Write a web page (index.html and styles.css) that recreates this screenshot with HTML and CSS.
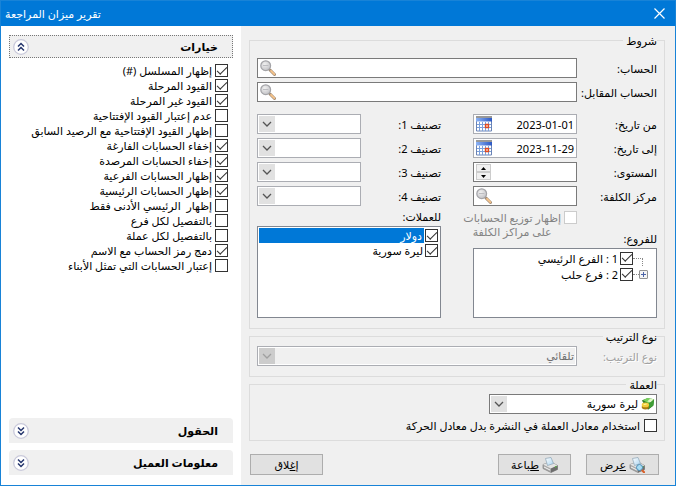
FILE: index.html
```html
<!DOCTYPE html>
<html lang="ar" dir="rtl">
  <head>
    <meta charset="UTF-8" />
    <meta name="viewport" content="width=device-width, initial-scale=1.0" />
    <title>تقرير ميزان المراجعة</title>
    <link rel="stylesheet" href="styles.css">
  </head>
  <body>
    <!-- icons -->
    <svg class="sprite" aria-hidden="true">
      <defs>
        <radialGradient id="lens" cx="40%" cy="35%" r="65%">
          <stop offset="0" stop-color="#f0f0f0" />
          <stop offset="1" stop-color="#c4c4c8" />
        </radialGradient>
        <linearGradient id="calHead" x1="0" x2="1" y1="0" y2="0">
          <stop offset="0" stop-color="#8db4f5" />
          <stop offset="1" stop-color="#2b57c4" />
        </linearGradient>
        <linearGradient id="paper" x1="0" x2="1" y1="0" y2="1">
          <stop offset="0" stop-color="#ffffff" />
          <stop offset="1" stop-color="#a9d3f0" />
        </linearGradient>
      </defs>
      <symbol id="search" viewBox="0 0 16 16">
        <path d="M10 10l4.500 4.500" stroke="#a08b76" stroke-width="3" stroke-linecap="round" />
        <path d="M11 10.800l3.300 3.400" stroke="#f7c48a" stroke-width="1.800" stroke-linecap="round" />
        <circle cx="5.700" cy="5.700" r="4.900" fill="url(#lens)" stroke="#a4a4a8" stroke-width="1.200" />
        <path d="M3 5.500h5.400" stroke="#bdbdc1" />
      </symbol>
      <symbol id="calendar" viewBox="0 0 16 16">
        <path d="M.5 2.500h15v12.500H.5z" fill="#fff" stroke="#6a83b5" />
        <path d="M0 2h16v3.500H0z" fill="url(#calHead)" />
        <path d="M.5 1h15" stroke="#333" stroke-width="2" stroke-dasharray="1 1" />
        <path d="M1 8.500h14M1 11.500h14M3.500 6v9M6.500 6v9M9.500 6v9M12.500 6v9" stroke="#7aa0dc" />
        <path d="M9.500 8.500h3v3h-3z" fill="#fbe3d8" stroke="#e04a20" stroke-width="1.400" />
      </symbol>
      <symbol id="printer" viewBox="0 0 16 16">
        <path d="M1 7.500L9 5l6.500 3.500v4L9 15.500 1 11.500z" fill="#a9a9a9" stroke="#7e7e7e" stroke-width=".7" />
        <path d="M1 7.500L9 5l6.500 3.500L9 11.500z" fill="#e4e4e4" />
        <path d="M3.500 1.500L9 .5l2.500 6L5.500 8.500z" fill="url(#paper)" stroke="#8ba3b5" stroke-width=".7" />
        <path d="M9 11.500v4l6.500-3v-4z" fill="#6d6d6d" />
        <path d="M2 10l6 3" stroke="#f6f6f6" />
        <circle cx="13.700" cy="9.800" r=".8" fill="#59c23c" />
      </symbol>
      <symbol id="preview" viewBox="0 0 16 16">
        <use href="#printer" />
        <path d="M12.500 12.500l2.500 2.700" stroke="#d8622c" stroke-width="2.200" stroke-linecap="round" />
        <circle cx="10.500" cy="10.500" r="3" fill="#a8dcf4" stroke="#4c8db5" />
      </symbol>
      <symbol id="money" viewBox="0 0 16 16">
        <path d="M1 4l6-2.500 8 1-1 7.500-6 4.500z" fill="#2f7a2a" />
        <path d="M2 3.500L8 1l7 1.500-6 5z" fill="#79d25e" />
        <path d="M7 5l3.500-3 4 .5L11 6z" fill="#e2f6c8" />
        <path d="M9 8l6-5-.8 6.500L9.500 13z" fill="#3f9e35" />
        <ellipse cx="5" cy="11.500" rx="4.200" ry="2.800" fill="#a97c12" />
        <ellipse cx="5" cy="9" rx="4.200" ry="2.600" fill="#f3cd3c" />
        <path d="M3 8.500l3.500-.5" stroke="#fff3a8" stroke-width="1.200" />
      </symbol>
      <symbol id="down" viewBox="0 0 16 16">
        <path d="M4 6l4 4 4-4" fill="none" stroke="currentColor" stroke-width="1.300" />
      </symbol>
      <symbol id="chevrons" viewBox="0 0 16 16">
        <circle cx="8" cy="8" r="7.300" fill="#fff" stroke="#c9c9da" stroke-width="1.300" />
        <path d="M5 7.500l3-3 3 3M5 11.500l3-3 3 3" fill="none" stroke="#26366e" stroke-width="1.500" />
      </symbol>
    </svg>

    <div class="window">
      <header class="titlebar">
        <button class="close" type="button" aria-label="إغلاق النافذة">
          <svg viewBox="0 0 11 11"><path d="M.5.5l10 10M10.500.5l-10 10" stroke="#fff" stroke-width="1.200" /></svg>
        </button>
        <h1>تقرير ميزان المراجعة</h1>
      </header>

      <form class="content">
        <main class="main">
          <fieldset class="group terms">
            <legend>شروط</legend>
            <div class="row">
              <label for="account">الحساب:</label>
              <span class="field">
                <input id="account" type="text">
                <svg class="icon"><use href="#search" /></svg>
              </span>
            </div>
            <div class="row">
              <label for="contra">الحساب المقابل:</label>
              <span class="field">
                <input id="contra" type="text">
                <svg class="icon"><use href="#search" /></svg>
              </span>
            </div>

            <div class="columns">
              <div class="column">
                <div class="row">
                  <label for="from">من تاريخ:</label>
                  <span class="field light">
                    <input id="from" type="text" value="2023-01-01">
                    <svg class="icon"><use href="#calendar" /></svg>
                  </span>
                </div>
                <div class="row">
                  <label for="to">إلى تاريخ:</label>
                  <span class="field light">
                    <input id="to" type="text" value="2023-11-29">
                    <svg class="icon"><use href="#calendar" /></svg>
                  </span>
                </div>
                <div class="row">
                  <label for="level">المستوى:</label>
                  <span class="field">
                    <input id="level" type="text">
                    <span class="spin">
                      <button type="button" aria-label="زيادة"><svg viewBox="0 0 5 3"><path d="M0 3L2.500 0 5 3z" /></svg></button>
                      <button type="button" aria-label="إنقاص"><svg viewBox="0 0 5 3"><path d="M0 0h5L2.500 3z" /></svg></button>
                    </span>
                  </span>
                </div>
                <div class="row">
                  <label for="center">مركز الكلفة:</label>
                  <span class="field">
                    <input id="center" type="text">
                    <svg class="icon"><use href="#search" /></svg>
                  </span>
                </div>
                <label class="check spread"><input type="checkbox" disabled><span>إظهار توزيع الحسابات<br>على مراكز الكلفة</span></label>
                <div class="caption">للفروع:</div>
                <ul class="list tree">
                  <li><i class="line"></i><label class="check"><input type="checkbox" checked><span>1 : الفرع الرئيسي</span></label></li>
                  <li><button class="expand" type="button" aria-label="توسيع"></button><i class="dash"></i><label class="check"><input type="checkbox" checked><span>2 : فرع حلب</span></label></li>
                </ul>
              </div>

              <div class="column">
                <div class="row">
                  <label for="class1">تصنيف 1:</label>
                  <span class="field light"><select id="class1"><option></option></select><svg class="arrow"><use href="#down" /></svg></span>
                </div>
                <div class="row">
                  <label for="class2">تصنيف 2:</label>
                  <span class="field light"><select id="class2"><option></option></select><svg class="arrow"><use href="#down" /></svg></span>
                </div>
                <div class="row">
                  <label for="class3">تصنيف 3:</label>
                  <span class="field light"><select id="class3"><option></option></select><svg class="arrow"><use href="#down" /></svg></span>
                </div>
                <div class="row">
                  <label for="class4">تصنيف 4:</label>
                  <span class="field light"><select id="class4"><option></option></select><svg class="arrow"><use href="#down" /></svg></span>
                </div>
                <div class="caption">للعملات:</div>
                <ul class="list">
                  <li class="selected"><label class="check"><input type="checkbox" checked><span>دولار</span></label></li>
                  <li><label class="check"><input type="checkbox" checked><span>ليرة سورية</span></label></li>
                </ul>
              </div>
            </div>
          </fieldset>

          <fieldset class="group">
            <legend>نوع الترتيب</legend>
            <div class="row disabled">
              <label for="order">نوع الترتيب:</label>
              <span class="field light"><select id="order" disabled><option>تلقائي</option></select><svg class="arrow"><use href="#down" /></svg></span>
            </div>
          </fieldset>

          <fieldset class="group">
            <legend>العملة</legend>
            <div class="field currency">
              <svg class="icon"><use href="#money" /></svg>
              <select aria-label="العملة"><option>ليرة سورية</option></select>
              <svg class="arrow"><use href="#down" /></svg>
            </div>
            <label class="check rate"><input type="checkbox"><span>استخدام معادل العملة في النشرة بدل معادل الحركة</span></label>
          </fieldset>

          <div class="buttons">
            <button type="button"><svg class="icon"><use href="#preview" /></svg><span><u>ع</u>رض</span></button>
            <button type="button"><svg class="icon"><use href="#printer" /></svg><span><u>ط</u>باعة</span></button>
            <button type="button" class="quit"><span>إ<u>غ</u>لاق</span></button>
          </div>
        </main>

        <aside class="sidebar">
          <button class="header open" type="button">خيارات<svg class="icon"><use href="#chevrons" /></svg></button>
          <div class="options">
            <label class="check"><input type="checkbox" checked><span>إظهار المسلسل (#)</span></label>
            <label class="check"><input type="checkbox" checked><span>القيود المرحلة</span></label>
            <label class="check"><input type="checkbox" checked><span>القيود غير المرحلة</span></label>
            <label class="check"><input type="checkbox"><span>عدم إعتبار القيود الإفتتاحية</span></label>
            <label class="check"><input type="checkbox"><span>إظهار القيود الإفتتاحية مع الرصيد السابق</span></label>
            <label class="check"><input type="checkbox" checked><span>إخفاء الحسابات الفارغة</span></label>
            <label class="check"><input type="checkbox" checked><span>إخفاء الحسابات المرصدة</span></label>
            <label class="check"><input type="checkbox" checked><span>إظهار الحسابات الفرعية</span></label>
            <label class="check"><input type="checkbox" checked><span>إظهار الحسابات الرئيسية</span></label>
            <label class="check"><input type="checkbox"><span>إظهار&nbsp; الرئيسي الأدنى فقط</span></label>
            <label class="check"><input type="checkbox"><span>بالتفصيل لكل فرع</span></label>
            <label class="check"><input type="checkbox"><span>بالتفصيل لكل عملة</span></label>
            <label class="check"><input type="checkbox" checked><span>دمج رمز الحساب مع الاسم</span></label>
            <label class="check"><input type="checkbox"><span>إعتبار الحسابات التي تمثل الأبناء</span></label>
          </div>
          <button class="header" type="button">الحقول<svg class="icon"><use href="#chevrons" /></svg></button>
          <button class="header" type="button">معلومات العميل<svg class="icon"><use href="#chevrons" /></svg></button>
        </aside>
      </form>
    </div>
  </body>
</html>
```
FILE: styles.css
```css
* {
  box-sizing: border-box;
}
body,
h1,
ul,
fieldset {
  margin: 0;
  padding: 0;
}
body {
  font: 11px/13px "Noto Sans", "DejaVu Sans", sans-serif;
  color: #000;
  background-color: #f0f0f0;
}
button,
input,
select {
  margin: 0;
  padding: 0;
  border: 0;
  border-radius: 0;
  font: inherit;
  color: inherit;
  background: none;
}
select {
  font-family: "DejaVu Sans", sans-serif;
}
svg {
  display: block;
  flex: none;
}
.sprite {
  position: absolute;
  width: 0;
  height: 0;
}
.icon {
  width: 16px;
  height: 16px;
}
.window {
  display: flex;
  flex-direction: column;
  min-height: 100vh;
  border: 1px solid #1883d7;
}

/* title */
.titlebar {
  display: flex;
  justify-content: space-between;
  align-items: center;
  height: 25px;
  padding: 0 10px 0 4px;
  color: #fff;
  background-color: #0078d7;
}
.titlebar h1 {
  font-size: 11px;
  font-weight: normal;
}
.close svg {
  width: 11px;
  height: 11px;
}
.content {
  display: flex;
  flex: 1;
}

/* options side */
.sidebar {
  display: flex;
  flex-direction: column;
  width: 240px;
  padding: 9px 8px 10px;
  background-color: #fff;
}
.header {
  display: flex;
  justify-content: space-between;
  align-items: center;
  height: 25px;
  padding: 0 15px 0 4px;
  border-radius: 4px 4px 0 0;
  font-weight: bold;
  background-color: #f0f0f0;
}
.header + .header {
  margin-top: 7px;
}
.header:not(.open) .icon {
  transform: scaleY(-1);
}
.header.open {
  height: 23px;
  padding: 0 14px 0 3px;
  border: 1px dotted #777;
  border-radius: 0;
}
.options {
  flex: 1;
  padding: 5px 5px 0 0;
}
.check {
  display: flex;
  align-items: center;
  gap: 3px;
  min-height: 15px;
  white-space: nowrap;
}
.check input {
  flex: none;
  display: grid;
  place-items: center;
  width: 13px;
  height: 13px;
  border: 1px solid #333;
  background-color: #fff;
  appearance: none;
}
.check input:checked::before {
  content: "";
  width: 9px;
  height: 4px;
  margin-bottom: 3px;
  border: solid #333;
  border-width: 0 0 1px 1px;
  transform: rotate(-45deg);
}
.check input:disabled {
  border-color: #ccc;
}

/* main side */
.main {
  flex: 1;
  min-width: 0;
  padding: 8px 10px 9px 8px;
}
.group {
  min-width: 0;
  margin-bottom: 1px;
  padding: 3px 7px 10px;
  border: 1px solid #dcdcdc;
}
.group legend {
  padding: 0 0 0 3px;
}
.terms {
  padding-top: 11px;
}
.row {
  display: flex;
  align-items: center;
  height: 20px;
  margin-bottom: 4px;
}
.row label {
  flex: none;
  width: 80px;
  white-space: nowrap;
}
.group > .row:last-child {
  margin-bottom: 0;
}
.field {
  position: relative;
  display: flex;
  align-items: center;
  flex: 1;
  min-width: 0;
  height: 20px;
  padding: 1px 1px 1px 2px;
  border: 1px solid #7a7a7a;
  background-color: #fff;
}
.field.light {
  border-color: #abadb3;
}
.field input,
.field select {
  flex: 1;
  min-width: 0;
  width: 100%;
  height: 16px;
  padding-right: 1px;
  outline: none;
  appearance: none;
}
.arrow {
  position: absolute;
  left: 1px;
  top: 1px;
  width: 16px;
  height: 16px;
  color: #555;
  background-color: #e1e1e1;
  pointer-events: none;
}
.disabled {
  color: #a0a0a0;
  text-shadow: 1px 1px #fff;
}
.field select:disabled {
  color: #6d6d6d;
  background-color: #f0f0f0;
  opacity: 1;
}
.disabled .arrow {
  color: #a0a0a0;
  background-color: #ccc;
}
.columns {
  display: grid;
  grid-template-columns: 1fr 1fr;
  gap: 32px;
  padding-top: 8px;
}
.column {
  display: flex;
  flex-direction: column;
  min-width: 0;
}
.spin {
  display: flex;
  flex-direction: column;
  width: 15px;
  height: 16px;
}
.spin button {
  display: grid;
  place-items: center;
  flex: 1;
  border: 1px solid #ccc;
  background-color: #f0f0f0;
}
.spin svg {
  width: 5px;
  height: 3px;
}
.spread {
  align-items: flex-start;
  margin: 1px 80px -7px 0;
  line-height: 14px;
  color: #838383;
  text-align: center;
}
.caption {
  height: 13px;
  margin-bottom: 3px;
}
.list {
  flex: 1;
  min-height: 70px;
  padding: 1px;
  border: 1px solid #828790;
  background-color: #fff;
  list-style: none;
}
.list .check {
  gap: 0;
  padding-right: 1px;
}
.list .check span {
  padding: 1px 2px;
}
.selected .check span {
  flex: 1;
  margin-right: 1px;
  color: #fff;
  background-color: #0078d7;
}
.tree {
  padding: 1px 8px;
}
.tree li {
  display: flex;
  align-items: center;
  height: 16px;
}
.tree .check {
  padding-right: 0;
}
.tree .line {
  align-self: flex-end;
  width: 10px;
  height: 8px;
  margin-right: 5px;
  border: dotted #888;
  border-width: 1px 1px 0 0;
}
.tree .dash {
  width: 6px;
  border-top: 1px dotted #888;
}
.expand {
  width: 9px;
  height: 9px;
  border: 1px solid #919191;
  border-radius: 1px;
  background: linear-gradient(#4b63a7, #4b63a7) center / 5px 1px no-repeat,
    linear-gradient(#4b63a7, #4b63a7) center / 1px 5px no-repeat, #f4f4f4;
}
.currency {
  width: 42%;
}
.currency select {
  padding-right: 3px;
}
.currency .icon {
  width: 14px;
}
.rate {
  gap: 4px;
  margin: 4px 0 -3px;
}
.buttons {
  display: flex;
  gap: 15px;
  padding: 12px 6px 0 1px;
}
.buttons button {
  display: flex;
  justify-content: center;
  align-items: center;
  gap: 3px;
  width: 73px;
  height: 21px;
  border: 1px solid #adadad;
  background-color: #e1e1e1;
}
.buttons .quit {
  margin-right: auto;
}
```
